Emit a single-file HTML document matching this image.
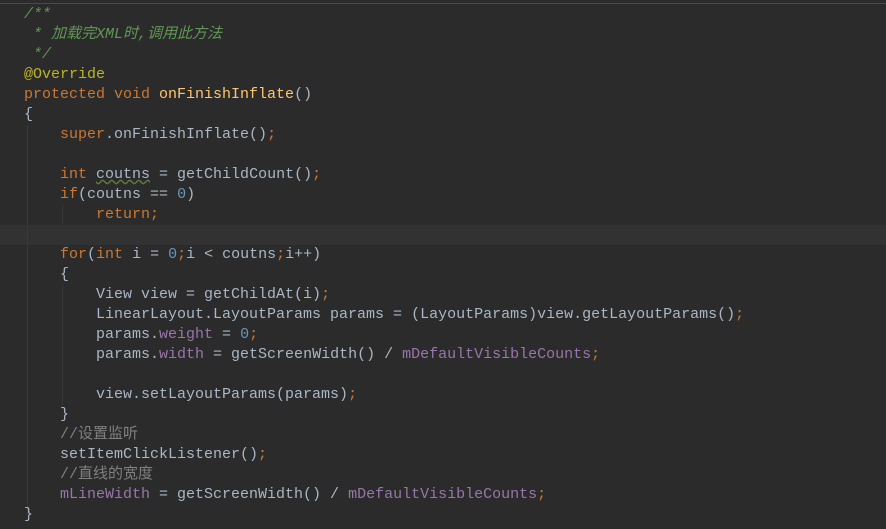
<!DOCTYPE html><html><head><meta charset="utf-8"><style>
html,body{margin:0;padding:0;background:#2b2b2b;width:886px;height:529px;overflow:hidden}
.top{position:absolute;left:0;top:3px;width:886px;height:1px;background:#4a4a4a}
.cur{position:absolute;left:0;top:225px;width:886px;height:20px;background:#323232}
.g{position:absolute;width:1px;background:#393939}
pre{position:absolute;left:24px;top:5px;margin:0;font:15px/20px "Liberation Mono","Noto Sans CJK SC",monospace;color:#a9b7c6}
.k{color:#cc7832}.c{color:#629755;font-style:italic}.a{color:#bbb529}.n{color:#6897bb}.f{color:#9876aa}.d{color:#ffc66d}
.w{text-decoration:underline wavy #5a7a3a}
</style></head><body>
<div class="top"></div><div class="cur"></div>
<div class="g" style="left:27px;top:125px;height:390px"></div>
<div class="g" style="left:62px;top:205px;height:20px"></div>
<div class="g" style="left:62px;top:285px;height:120px"></div>
<pre><span class="c">/**
 * 加载完XML时,调用此方法
 */</span>
<span class="a">@Override</span>
<span class="k">protected void </span><span class="d">onFinishInflate</span>()
{
    <span class="k">super</span>.onFinishInflate()<span class="k">;</span>

    <span class="k">int </span><span class="w">coutns</span> = getChildCount()<span class="k">;</span>
    <span class="k">if</span>(coutns == <span class="n">0</span>)
        <span class="k">return;</span>

    <span class="k">for</span>(<span class="k">int </span>i = <span class="n">0</span><span class="k">;</span>i &lt; coutns<span class="k">;</span>i++)
    {
        View view = getChildAt(i)<span class="k">;</span>
        LinearLayout.LayoutParams params = (LayoutParams)view.getLayoutParams()<span class="k">;</span>
        params.<span class="f">weight</span> = <span class="n">0</span><span class="k">;</span>
        params.<span class="f">width</span> = getScreenWidth() / <span class="f">mDefaultVisibleCounts</span><span class="k">;</span>

        view.setLayoutParams(params)<span class="k">;</span>
    }
    <span style="color:#808080">//设置监听</span>
    setItemClickListener()<span class="k">;</span>
    <span style="color:#808080">//直线的宽度</span>
    <span class="f">mLineWidth</span> = getScreenWidth() / <span class="f">mDefaultVisibleCounts</span><span class="k">;</span>
}</pre>
</body></html>
